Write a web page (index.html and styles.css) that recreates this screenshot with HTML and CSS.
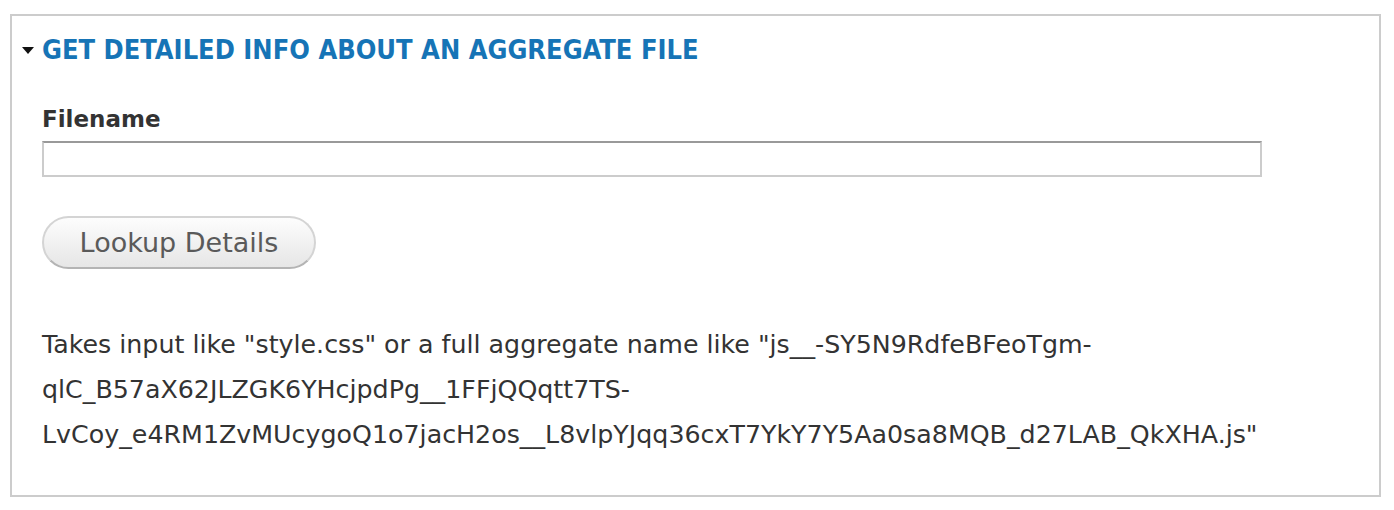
FILE: index.html
```html
<!DOCTYPE html>
<html lang="en">
<head>
    <meta charset="UTF-8">
    <title>Aggregate file info</title>
    <link rel="stylesheet" href="styles.css">
</head>
<body>
    <div class="fieldset">
        <div class="legend">
            <span class="arrow"></span>
            <a class="legend-link" href="#">Get detailed info about an aggregate file</a>
        </div>
        <div class="fieldset-wrapper">
            <div class="form-item">
                <label class="label" for="filename">Filename</label>
                <input class="form-text" type="text" id="filename">
            </div>
            <div class="actions">
                <button class="button" type="button">Lookup Details</button>
            </div>
            <div class="description">
                Takes input like "style.css" or a full aggregate name like "js__-SY5N9RdfeBFeoTgm-qlC_B57aX62JLZGK6YHcjpdPg__1FFjQQqtt7TS-LvCoy_e4RM1ZvMUcygoQ1o7jacH2os__L8vlpYJqq36cxT7YkY7Y5Aa0sa8MQB_d27LAB_QkXHA.js"
            </div>
        </div>
    </div>
</body>
</html>
```

FILE: styles.css
```css
/* General styles */
body {
    margin: 0;
    padding: 0;
    background: #fff;
    color: #333;
    font-family: "DejaVu Sans", "Liberation Sans", sans-serif;
}

.fieldset {
    margin: 14px 13px 13px 10px;
    border: 2px solid #ccc;
    padding: 16px 30px 36px 10px;
    box-sizing: border-box;
    height: 483px;
}

/* Legend with collapse arrow */
.legend {
    display: flex;
    align-items: center;
    height: 34px;
}
.arrow {
    width: 0;
    height: 0;
    border-left: 6px solid transparent;
    border-right: 6px solid transparent;
    border-top: 7px solid #111;
    margin-right: 8px;
    margin-top: 3px;
}
.legend-link {
    font-family: "DejaVu Sans Condensed", "DejaVu Sans", sans-serif;
    font-weight: bold;
    font-size: 27px;
    text-transform: uppercase;
    color: #1674b6;
    text-decoration: none;
}

.fieldset-wrapper {
    padding-left: 20px;
}

.form-item {
    margin-top: 38px;
}
.label {
    display: block;
    font-weight: bold;
    font-size: 23px;
    line-height: 30px;
    color: #333;
    margin-bottom: 7px;
}
.form-text {
    display: block;
    box-sizing: border-box;
    width: 1220px;
    height: 36px;
    margin: 0;
    border: 2px solid #ccc;
    border-top-color: #999;
    background: #fff;
    padding: 4px 8px;
    font-size: 24px;
}

.actions {
    margin-top: 39px;
}
.button {
    box-sizing: border-box;
    height: 53px;
    width: 274px;
    padding: 0;
    border: 2px solid #d4d4d4;
    border-bottom-color: #b4b4b4;
    border-radius: 30px;
    background: linear-gradient(#fdfdfd, #e6e6e6);
    color: #5a5a5a;
    font-family: "DejaVu Sans", sans-serif;
    font-size: 27px;
}

.description {
    margin-top: 53px;
    width: 1240px;
    font-size: 25.3px;
    line-height: 45px;
    color: #333;
}
```
